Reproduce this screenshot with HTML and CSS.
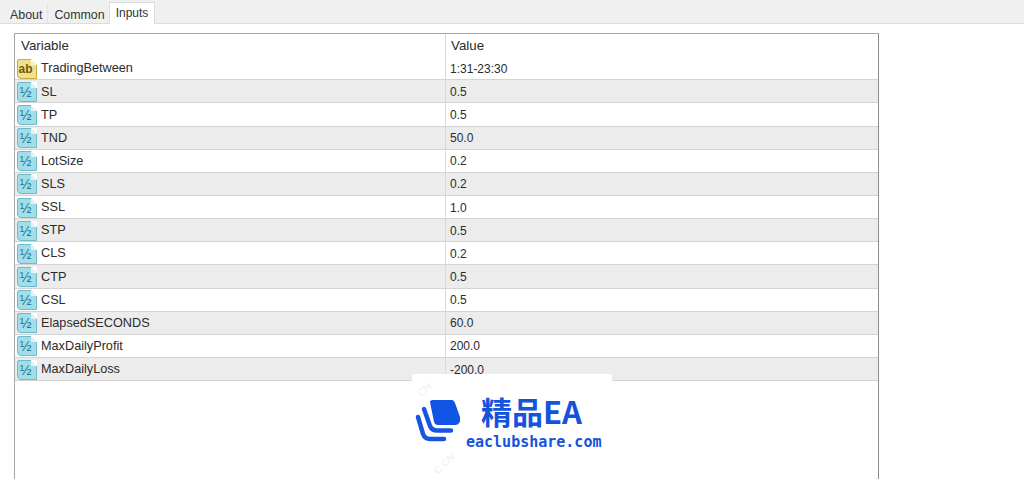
FILE: index.html
```html
<!DOCTYPE html>
<html lang="en">
<head>
  <meta charset="UTF-8" />
  <title>Inputs</title>
  <link rel="stylesheet" href="styles.css">
</head>
<body>
  <!-- Tabs -->
  <div class="tabs">
    <div class="tab">About</div>
    <div class="tab">Common</div>
    <div class="tab active">Inputs</div>
  </div>

  <!-- Table -->
  <div class="panel">
    <div class="table">
      <div class="row head">
        <div class="cell name">Variable</div>
        <div class="cell">Value</div>
      </div>
      <div class="row">
        <div class="cell name"><span class="icon ab">ab</span>TradingBetween</div>
        <div class="cell">1:31-23:30</div>
      </div>
      <div class="row alt">
        <div class="cell name"><span class="icon">½</span>SL</div>
        <div class="cell">0.5</div>
      </div>
      <div class="row">
        <div class="cell name"><span class="icon">½</span>TP</div>
        <div class="cell">0.5</div>
      </div>
      <div class="row alt">
        <div class="cell name"><span class="icon">½</span>TND</div>
        <div class="cell">50.0</div>
      </div>
      <div class="row">
        <div class="cell name"><span class="icon">½</span>LotSize</div>
        <div class="cell">0.2</div>
      </div>
      <div class="row alt">
        <div class="cell name"><span class="icon">½</span>SLS</div>
        <div class="cell">0.2</div>
      </div>
      <div class="row">
        <div class="cell name"><span class="icon">½</span>SSL</div>
        <div class="cell">1.0</div>
      </div>
      <div class="row alt">
        <div class="cell name"><span class="icon">½</span>STP</div>
        <div class="cell">0.5</div>
      </div>
      <div class="row">
        <div class="cell name"><span class="icon">½</span>CLS</div>
        <div class="cell">0.2</div>
      </div>
      <div class="row alt">
        <div class="cell name"><span class="icon">½</span>CTP</div>
        <div class="cell">0.5</div>
      </div>
      <div class="row">
        <div class="cell name"><span class="icon">½</span>CSL</div>
        <div class="cell">0.5</div>
      </div>
      <div class="row alt">
        <div class="cell name"><span class="icon">½</span>ElapsedSECONDS</div>
        <div class="cell">60.0</div>
      </div>
      <div class="row">
        <div class="cell name"><span class="icon">½</span>MaxDailyProfit</div>
        <div class="cell">200.0</div>
      </div>
      <div class="row alt">
        <div class="cell name"><span class="icon">½</span>MaxDailyLoss</div>
        <div class="cell">-200.0</div>
      </div>
    </div>
  </div>

  <!-- Logo over the table -->
  <div class="logo">
    <svg class="logo-mark" viewBox="3 3 47 44">
      <path d="M18 7Q18 5 21 5H40Q42 5 43 8L48 22Q49 30 43 30H26Q23 30 22 27Z" fill="#1054e6"/>
      <path d="M12 14L18 31Q20 35.500 25 35.500H39" fill="none" stroke="#1757e0" stroke-width="4.500" stroke-linecap="round"/>
      <path d="M6 22L11 39Q13 44 18 44H32" fill="none" stroke="#1757e0" stroke-width="4.500" stroke-linecap="round"/>
    </svg>
    <div class="logo-text">
      <div class="logo-title">精品EA</div>
      <div class="logo-url">eaclubshare.com</div>
    </div>
    <span class="mark-a">CN</span>
    <span class="mark-b">C.CN</span>
  </div>
</body>
</html>
```

FILE: styles.css
```css
html, body {
  height: 100%;
}

body {
  margin: 0;
  overflow: hidden;
  background: #fff;
  color: #2b2b2b;
  font-family: "Liberation Sans", Arial, sans-serif;
  font-size: 12px;
}

.tabs {
  display: flex;
  align-items: flex-end;
  height: 23px;
  padding-left: 4px;
  background: #f0f0f0;
  border-bottom: 1px solid #dcdcdc;
}

.tab {
  box-sizing: border-box;
  height: 19px;
  padding: 4px 5px 0 6px;
  border-right: 1px solid #e4e4e4;
  color: #333;
  font-size: 12.4px;
  line-height: 14px;
}

.tab.active {
  height: 22px;
  margin-bottom: -1px;
  margin-left: -2px;
  padding: 3px 6px 0 6px;
  background: #fff;
  border: 1px solid #dcdcdc;
  border-bottom: none;
  font-size: 12px;
}

.panel {
  padding: 9px 0 0 14px;
}

.table {
  box-sizing: border-box;
  width: 865px;
  height: 460px;
  background: #fff;
  border: 1px solid #a8a8a8;
  border-right-color: #8c8c8c;
}

.row {
  box-sizing: border-box;
  display: flex;
  height: 23.15px;
  border-bottom: 1px solid #d4d4d4;
}

.row.head {
  border-bottom: none;
  font-size: 13.3px;
}

.row.alt {
  background: #ececec;
}

.cell {
  display: flex;
  align-items: center;
  padding: 1px 0 0 4px;
  border-left: 1px solid #dadada;
  line-height: 1;
}

.cell.name {
  box-sizing: border-box;
  width: 430px;
  padding-left: 2px;
  border-left: none;
  font-size: 12.7px;
}

.head .cell {
  padding: 0 0 0 5px;
}

.head .cell.name {
  padding-left: 6px;
  font-size: 13.3px;
}

.icon {
  position: relative;
  flex: none;
  box-sizing: border-box;
  display: flex;
  align-items: center;
  justify-content: center;
  width: 20px;
  height: 20px;
  margin-right: 4px;
  padding-right: 3px;
  background: #a3dde8;
  border: 1px solid #6cbccd;
  border-radius: 2px 0 0 4px;
  color: #1c7c9a;
  font-size: 14px;
}

.icon::after {
  content: "";
  position: absolute;
  top: -1px;
  right: -1px;
  width: 6px;
  height: 6px;
  background: linear-gradient(to top right, #dff3f7 50%, #fff 50%);
}

.icon.ab {
  background: #f0e08f;
  border-color: #c9ab3f;
  color: #6d5a0c;
  font-size: 12px;
  font-weight: 700;
}

.icon.ab::after {
  background: linear-gradient(to top right, #fbf3cf 50%, #fff 50%);
}

.logo {
  position: absolute;
  left: 412px;
  top: 374px;
  box-sizing: border-box;
  display: flex;
  gap: 4px;
  width: 200px;
  height: 105px;
  padding: 20px 0 0 3px;
  background: #fff;
}

.logo-mark {
  flex: none;
  width: 47px;
  height: 44px;
  margin-top: 4px;
}

.logo-text {
  color: #1453dc;
}

.logo-title {
  padding-left: 15px;
  font-family: "Noto Sans CJK SC", sans-serif;
  font-size: 31px;
  font-weight: 700;
  line-height: 34px;
}

.logo-url {
  margin-top: 4px;
  font-family: "DejaVu Sans Mono", monospace;
  font-size: 15px;
  font-weight: 700;
  line-height: 20px;
  white-space: nowrap;
}

.mark-a,
.mark-b {
  position: absolute;
  color: #f1f1f1;
  font-size: 10px;
  transform: rotate(-45deg);
}

.mark-a {
  left: 5px;
  top: 10px;
}

.mark-b {
  left: 20px;
  top: 84px;
}
```
